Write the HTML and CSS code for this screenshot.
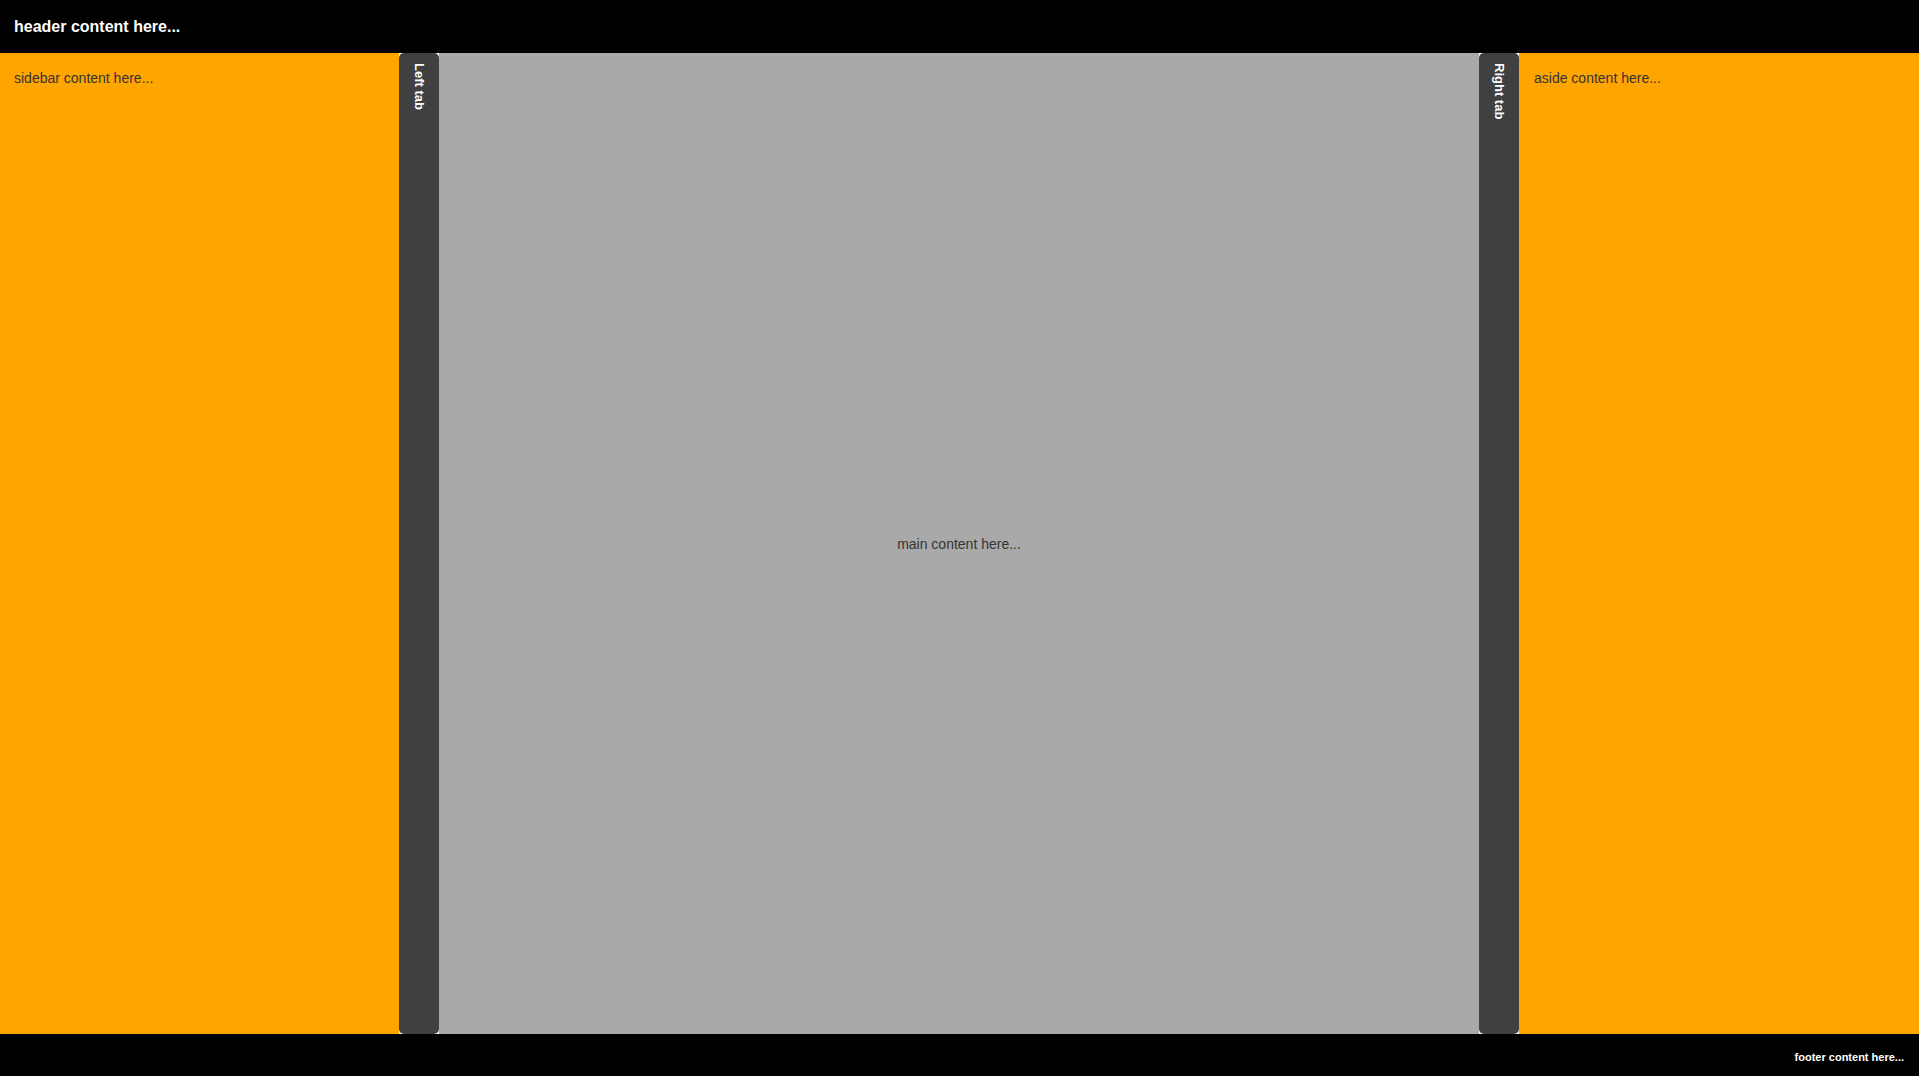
FILE: index.html
```html
<!DOCTYPE html>
<html>
<head>
<meta charset="utf-8">
<title>Layout</title>
<link rel="stylesheet" href="styles.css">
</head>
<body>
<div class="page">
  <header class="header">header content here...</header>
  <div class="middle">
    <div class="sidebar">sidebar content here...</div>
    <div class="tab"><span class="tab-label">Left tab</span></div>
    <main class="main">main content here...</main>
    <div class="tab"><span class="tab-label">Right tab</span></div>
    <aside class="aside">aside content here...</aside>
  </div>
  <footer class="footer">footer content here...</footer>
</div>
</body>
</html>
```

FILE: styles.css
```css
html, body {
  margin: 0;
  padding: 0;
  height: 100%;
  background: #ffffff;
  font-family: "Liberation Sans", Arial, sans-serif;
}
.page {
  display: flex;
  flex-direction: column;
  height: 100vh;
}
.header {
  height: 53px;
  flex: 0 0 53px;
  background: #000;
  color: #fff;
  font-size: 16px;
  font-weight: bold;
  display: flex;
  align-items: center;
  padding: 0 14px;
  box-sizing: border-box;
}
.middle {
  flex: 1 1 auto;
  display: flex;
  min-height: 0;
}
.sidebar {
  flex: 0 0 399px;
  background: #ffa500;
  color: #333;
  font-size: 14px;
  padding: 17px 14px;
  box-sizing: border-box;
}
.aside {
  flex: 0 0 400px;
  background: #ffa500;
  color: #333;
  font-size: 14px;
  padding: 17px 15px;
  box-sizing: border-box;
}
.tab {
  flex: 0 0 40px;
  background: #404040;
  border-radius: 5px;
  display: flex;
  justify-content: center;
  align-items: flex-start;
  padding-top: 10px;
  box-sizing: border-box;
}
.tab-label {
  writing-mode: vertical-rl;
  color: #fff;
  font-size: 13px;
  font-weight: bold;
}
.main {
  flex: 1 1 auto;
  background: #a9a9a9;
  color: #333;
  font-size: 14px;
  display: flex;
  align-items: center;
  justify-content: center;
}
.footer {
  height: 42px;
  flex: 0 0 42px;
  background: #000;
  color: #fff;
  font-size: 11px;
  font-weight: bold;
  display: flex;
  align-items: center;
  justify-content: flex-end;
  padding: 4px 15px 0;
  box-sizing: border-box;
}
```
